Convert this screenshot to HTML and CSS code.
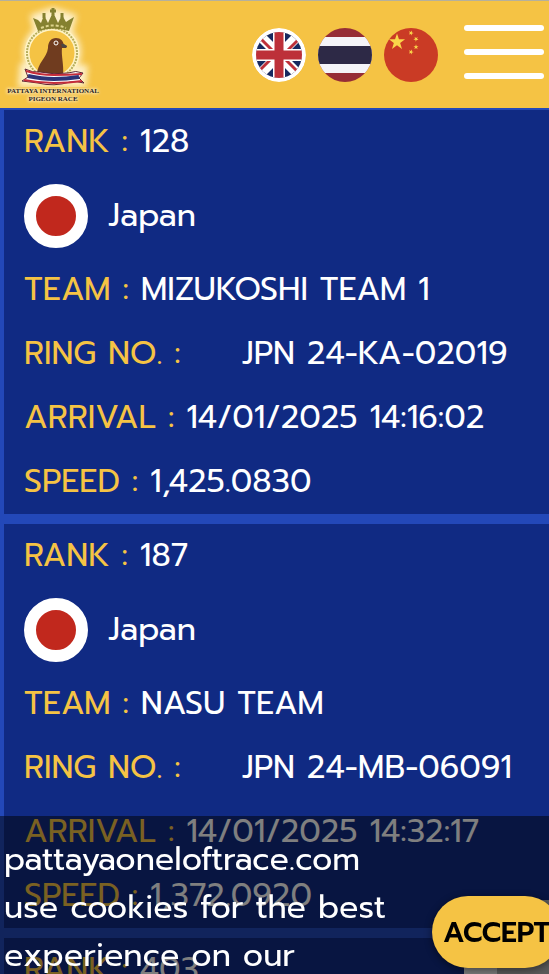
FILE: index.html
```
<!DOCTYPE html>
<html lang="en">
<head>
    <meta charset="UTF-8">
    <meta name="viewport" content="width=device-width, initial-scale=1.0">
    <title>Pattaya International Pigeon Race</title>
    <link rel="stylesheet" href="styles.css">
</head>
<body>
    <header class="topbar">
        <a href="#" class="logo" aria-label="Home">
            <svg viewBox="0 0 106 84" width="106" height="84">
                <g class="logo-glow">
                    <circle cx="52" cy="49" r="29"/>
                    <path d="M30 12 L53 4 L77 12 L72 30 L34 30 Z"/>
                    <path d="M20 60 L88 62 L86 84 L18 84 Z"/>
                </g>
                <circle cx="52" cy="50" r="25" fill="#f5c344" stroke="#fff3c4" stroke-width="5"/>
                <circle cx="52" cy="50" r="25" fill="none" stroke="#b5ad5c" stroke-width="2" stroke-dasharray="2 1"/>
                <path d="M33 15 L38 17 L41 20 L44 12 L48 20 L53 9 L58 20 L62 12 L66 19 L69 17 L74 14 L69 28 Q53 23 38 28 Z" fill="#85812f"/>
                <path d="M53 5 V12 M50 8 H56 M44 10 V15 M62 10 V15" stroke="#85812f" stroke-width="3"/>
                <path d="M41 25 Q53 20 66 25" fill="none" stroke="#ded48c" stroke-width="2" stroke-dasharray="3 2"/>
                <path d="M37 72 C37 60 47 55 48 45 C48 39 51 35 56 35 C61 35 63 38 64 42 L67 43 L66 45 L62 45 C61 52 64 62 63 72 Z" fill="#703c1f"/>
                <circle cx="56" cy="40" r="2" fill="#703c1f" stroke="#fff" stroke-width="1"/>
                <path d="M61 41 L64 41 L67 43 L66 45 L62 44 Z" fill="#4b4543"/>
                <path d="M25 66 Q33 70 40 69 Q54 72 68 70 Q76 67 83 70 L79 75 L84 80 Q77 78 70 79 Q54 84 38 80 Q30 79 22 78 L28 74 Z" fill="#fff" stroke="#5c2433" stroke-width="1"/>
                <path d="M26 68 Q39 72 54 72 T82 71 M24 77 Q39 80 54 80 T82 78" fill="none" stroke="#c52c3a" stroke-width="2"/>
                <path d="M28 73 Q42 76 54 76 T79 74" fill="none" stroke="#2c3478" stroke-width="4"/>
            </svg>
            <span class="logo-text">PATTAYA INTERNATIONAL<br>PIGEON RACE</span>
        </a>
        <nav class="languages">
            <a href="#" class="language" aria-label="English">
                <svg viewBox="0 0 54 54">
                    <defs><clipPath id="round"><circle cx="27" cy="27" r="23"/></clipPath></defs>
                    <circle cx="27" cy="27" r="27" fill="#fff"/>
                    <g clip-path="url(#round)">
                        <path d="M0 0 H54 V54 H0 Z" fill="#17295f"/>
                        <path d="M4 4 L50 50 M50 4 L4 50" stroke="#fff" stroke-width="10"/>
                        <path d="M6 8 L24 26 M52 6 L32 26 M48 46 L30 28 M2 48 L22 28" stroke="#bd3039" stroke-width="3"/>
                        <path d="M27 0 V54 M0 27 H54" stroke="#fff" stroke-width="12"/>
                        <path d="M27 0 V54 M0 27 H54" stroke="#bd3039" stroke-width="9"/>
                    </g>
                </svg>
            </a>
            <a href="#" class="language" aria-label="Thai">
                <svg viewBox="0 0 54 54">
                    <path d="M0 0 H54 V54 H0 Z" fill="#962d36"/>
                    <path d="M0 9 H54 V45 H0 Z" fill="#f4f4f8"/>
                    <path d="M0 18 H54 V36 H0 Z" fill="#2d2946"/>
                </svg>
            </a>
            <a href="#" class="language" aria-label="Chinese">
                <svg viewBox="0 0 54 54">
                    <defs><path id="star" d="M0 -10 L2.3 -3.1 H9.5 L3.7 1.2 L5.9 8.1 L0 3.8 L-5.9 8.1 L-3.7 1.2 L-9.5 -3.1 H-2.3 Z"/></defs>
                    <path d="M0 0 H54 V54 H0 Z" fill="#ca3b25"/>
                    <g fill="#f9d64a">
                        <use href="#star" transform="translate(13 14) scale(.85)"/>
                        <use href="#star" transform="translate(27 5) rotate(20) scale(.27)"/>
                        <use href="#star" transform="translate(32 11) rotate(40) scale(.27)"/>
                        <use href="#star" transform="translate(32 19) scale(.27)"/>
                        <use href="#star" transform="translate(27 24) rotate(20) scale(.27)"/>
                    </g>
                </svg>
            </a>
        </nav>
        <button type="button" class="menu-button" aria-label="Menu">
            <span></span>
            <span></span>
            <span></span>
        </button>
    </header>

    <main class="results">
        <article class="result">
            <p class="row"><span class="label">RANK :</span> 128</p>
            <p class="row country"><span class="flag"></span>Japan</p>
            <p class="row"><span class="label">TEAM :</span> MIZUKOSHI TEAM 1</p>
            <p class="row"><span class="label ring">RING NO. :</span> JPN 24-KA-02019</p>
            <p class="row"><span class="label">ARRIVAL :</span> 14/01/2025 14:16:02</p>
            <p class="row"><span class="label">SPEED :</span> 1,425.0830</p>
        </article>
        <article class="result">
            <p class="row"><span class="label">RANK :</span> 187</p>
            <p class="row country"><span class="flag"></span>Japan</p>
            <p class="row"><span class="label">TEAM :</span> NASU TEAM</p>
            <p class="row"><span class="label ring">RING NO. :</span> JPN 24-MB-06091</p>
            <p class="row"><span class="label">ARRIVAL :</span> 14/01/2025 14:32:17</p>
            <p class="row"><span class="label">SPEED :</span> 1,372.0920</p>
        </article>
        <article class="result">
            <p class="row"><span class="label">RANK :</span> 403</p>
        </article>
    </main>

    <div class="badge"></div>
    <div class="cookie-bar">
        <p class="cookie-text">pattayaoneloftrace.com<br>use cookies for the best<br>experience on our</p>
        <button type="button" class="accept">ACCEPT</button>
    </div>
</body>
</html>
```

FILE: styles.css
```
:root {
    --gold: #f5c344;
    --navy: #102a83;
    --blue: #2348b8;
}

* {
    box-sizing: border-box;
    margin: 0;
    padding: 0;
}

body {
    font-family: Prompt, "Noto Sans", sans-serif;
    font-size: 32px;
    line-height: 48px;
    height: 100vh;
    overflow: hidden;
    background: var(--blue);
    color: #fff;
}

.topbar {
    display: flex;
    align-items: center;
    height: 108px;
    padding-right: 5px;
    border-top: 1px solid #b5b09c;
    background: var(--gold);
}

.logo {
    display: flex;
    flex-direction: column;
    align-items: center;
    width: 106px;
    padding-bottom: 4px;
    color: #2b2322;
    text-decoration: none;
}

.logo svg {
    display: block;
}

.logo-glow {
    fill: #fdf0c8;
    filter: blur(3px);
}

.logo-text {
    font-family: "Liberation Serif", serif;
    font-size: 7px;
    font-weight: bold;
    line-height: 8px;
    text-align: center;
    white-space: nowrap;
    text-shadow: 0 0 3px #fff, 0 0 4px #fff;
}

.languages {
    display: flex;
    gap: 12px;
    margin-left: auto;
}

.language {
    width: 54px;
    height: 54px;
    border-radius: 50%;
    overflow: hidden;
}

.language svg {
    display: block;
}

.menu-button {
    display: flex;
    flex-direction: column;
    gap: 18px;
    width: 80px;
    margin-left: 26px;
    margin-bottom: 6px;
    border: 0;
    background: none;
}

.menu-button span {
    width: 100%;
    height: 6px;
    border-radius: 3px;
    background: #fff;
}

.results {
    display: flex;
    flex-direction: column;
    gap: 10px;
    padding: 2px 0 0 4px;
}

.result {
    background: var(--navy);
}

.row {
    padding: 8px 20px;
    white-space: nowrap;
}

.country {
    display: flex;
    align-items: center;
    gap: 20px;
    padding: 10px 20px;
}

.flag {
    width: 64px;
    height: 64px;
    border: 12px solid #fff;
    border-radius: 50%;
    background: #c1281d;
}

.label {
    color: var(--gold);
}

.ring {
    display: inline-block;
    width: 206px;
}

.cookie-bar {
    position: fixed;
    right: 0;
    bottom: 0;
    left: 0;
    display: flex;
    align-items: flex-end;
    justify-content: space-between;
    height: 158px;
    padding-left: 4px;
    background: rgba(0, 0, 0, 0.5);
}

.cookie-text {
    align-self: flex-start;
    padding-top: 20px;
    white-space: nowrap;
}

.accept {
    flex: none;
    width: 129px;
    height: 72px;
    margin: 0 -12px 6px 0;
    border: 0;
    border-radius: 36px;
    background: var(--gold);
    color: #000;
    font: 600 28px Prompt, "Noto Sans", sans-serif;
    box-shadow: 0 2px 8px rgba(0, 0, 0, 0.5);
}

.badge {
    position: fixed;
    right: 0;
    bottom: 0;
    width: 85px;
    height: 74px;
    border-left: 33px solid #f9f9f9;
    background: #b5b5b5;
}
```
